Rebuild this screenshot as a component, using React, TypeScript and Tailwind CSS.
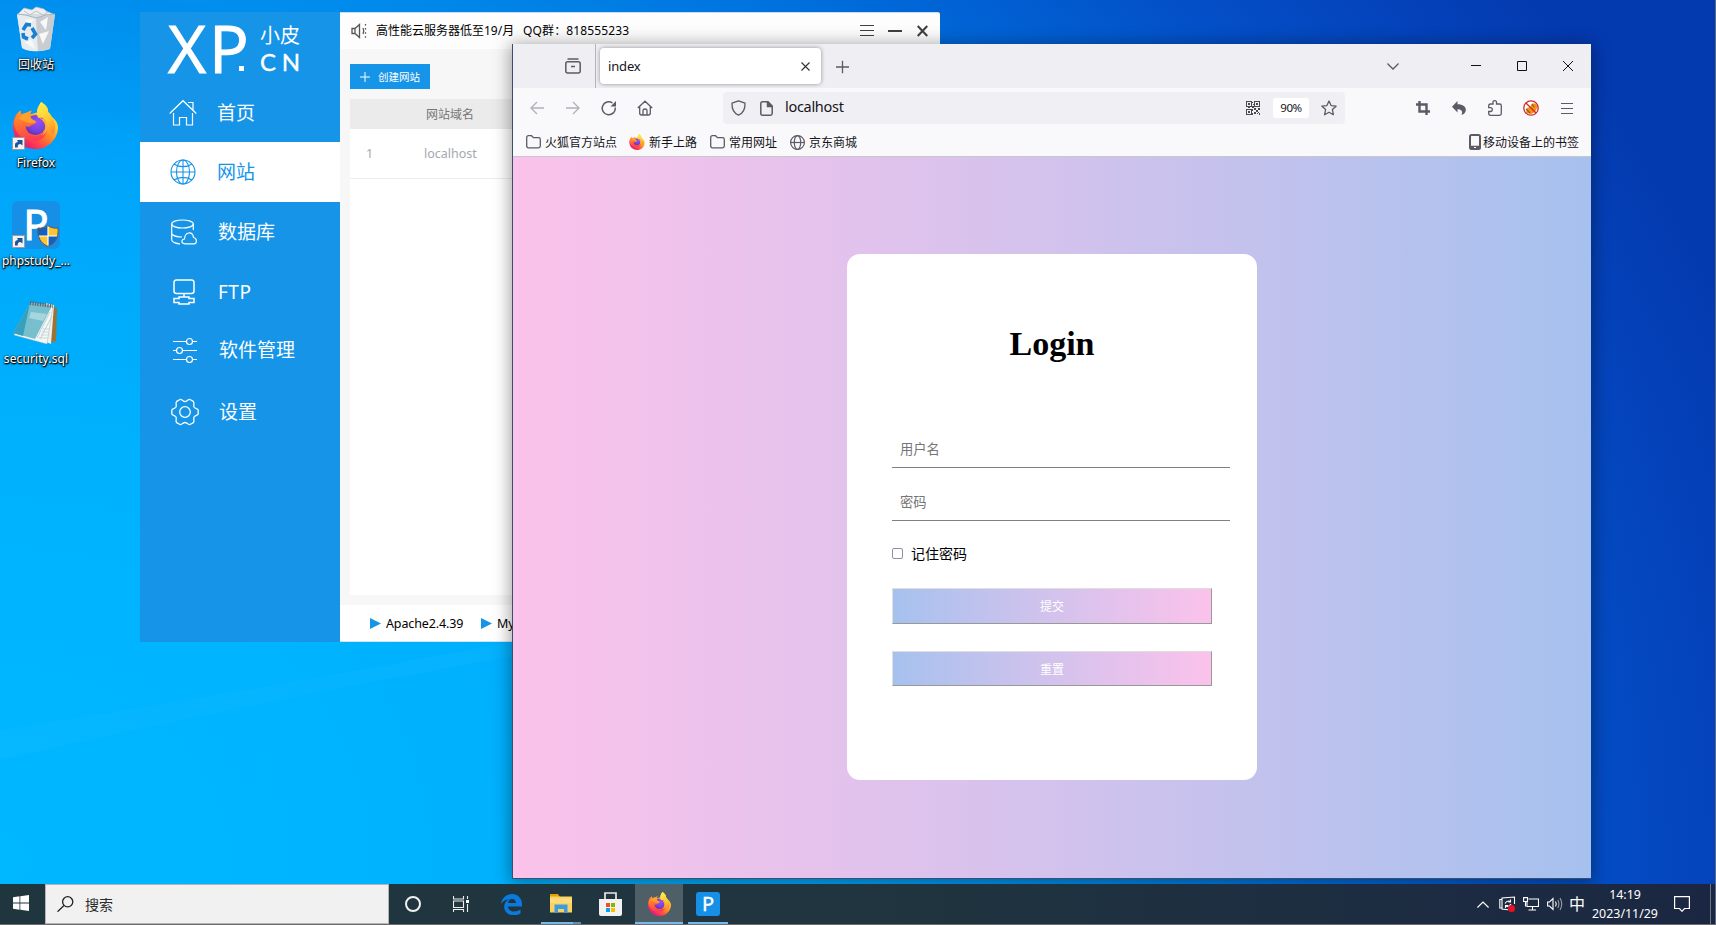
import type { ReactNode } from 'react';

function FirefoxLogo({ className, id }: { className: string; id: string }) {
  return (
    <svg className={className} viewBox="0 0 48 50">
      <defs>
        <linearGradient id={id + 'a'} x1="0.85" y1="0.1" x2="0.2" y2="0.95">
          <stop offset="0" stopColor="#fff04a" />
          <stop offset="0.3" stopColor="#ffc02c" />
          <stop offset="0.55" stopColor="#ff7d2b" />
          <stop offset="0.78" stopColor="#ff3c50" />
          <stop offset="1" stopColor="#e0127e" />
        </linearGradient>
        <radialGradient id={id + 'b'} cx="0.6" cy="0.35" r="0.7">
          <stop offset="0" stopColor="#9a4cf5" />
          <stop offset="0.6" stopColor="#7544e0" />
          <stop offset="1" stopColor="#6b2bb0" />
        </radialGradient>
        <linearGradient id={id + 'c'} x1="0.3" y1="0" x2="0.5" y2="1">
          <stop offset="0" stopColor="#ff9a2a" />
          <stop offset="0.5" stopColor="#ff6a35" />
          <stop offset="1" stopColor="#ff3a55" />
        </linearGradient>
        <linearGradient id={id + 'd'} x1="0.3" y1="0" x2="0.6" y2="1">
          <stop offset="0" stopColor="#fff04a" />
          <stop offset="0.6" stopColor="#ffc630" />
          <stop offset="1" stopColor="#ff8a30" />
        </linearGradient>
      </defs>
      <path
        d="M30 0C37 4 37.500 8 37.500 11C39.500 12 40 14 41 16C43.500 17 47.500 21 48 27C47.500 40 37 50 24 50C10 50 0 39 0 26C0 19 3 12 8 9C8 11 8.500 12 9 13C12 11.500 16 12 19 13L26 11C24.500 8 28 3 30 0Z"
        fill={`url(#${id}a)`}
      />
      <circle cx="24" cy="24.500" r="10.800" fill={`url(#${id}b)`} />
      <path
        d="M1 23C2 16 5 12 8 9C8 11 8.500 12.500 9.500 13.500C13 12 17 10 20 9C18 12 18 14 19 17C20 19 23 19 25 21C24 24 20 24 18 26C15 27 14 26 13 25C13 33 18 37 26 36C31 35 34 32 36 29C36 37 29 43 20 41C9 40 2 32 1 23Z"
        fill={`url(#${id}c)`}
      />
      <path d="M9.500 13.500C13 12 17 10 20 9C18 12 18 14 19 17C20 19 23 19 25 21C23 23 17 23 13 21C9 19 7 18 6 18Z" fill="#ff9f2c" />
      <path d="M30 0C37 5 37.500 8 37.500 11C43 16 48 25 43 35C39 34 38 21 34 18C31 16 29 17 27 17C24 12 27 5 30 0Z" fill={`url(#${id}d)`} />
      <path d="M28 17C35 17 38 23 36 30C35 33 33 35 31 36C37 29 35 21 28 17Z" fill="#ffad2e" />
    </svg>
  );
}

function ShortcutBadge() {
  return (
    <svg className="absolute bottom-0 left-0 size-[13px]" viewBox="0 0 13 13">
      <path d="M.5 .5h12v12H.5z" fill="#f3f3f3" stroke="#9c9c9c" />
      <path d="M3 10.500V8C3 5.800 4.500 5 6 5L5 3H10.500V8.500L8.500 7C6.500 7 5.500 8 5.800 10.500Z" fill="#1f5498" />
    </svg>
  );
}

function DesktopIcon({ label, children, width }: { label: string; children: ReactNode; width: string }) {
  return (
    <div className="flex h-[98px] w-[72px] flex-col items-center">
      <div className="relative size-12">{children}</div>
      <div className={'mt-[3px] flex h-5 items-center justify-center whitespace-nowrap text-[12px] leading-5 text-white [text-shadow:0_1px_2px_#000,1px_1px_1px_#000,0_0_2px_#000] ' + width}>
        {label}
      </div>
    </div>
  );
}

function RecycleBin() {
  return (
    <svg className="size-12" viewBox="0 0 48 48">
      <path d="M6 8L12 2L20 4L24 1L32 3L34 5L41 8L37 14H9Z" fill="#edf0f2" stroke="#b5bdc4" strokeWidth="0.700" />
      <path d="M5 8H43L38 43Q24 48 10 42Z" fill="#d9dde0" />
      <path d="M5 8L24 12L26 45Q17 46 10 42Z" fill="#e8ebee" />
      <path d="M24 12L43 8L38 43L26 45Z" fill="#c9cdd1" />
      <path d="M13 14L22 13L17 20ZM28 16L36 11L34 24ZM27 28L37 25L31 38ZM12 36L20 34L23 43Z" fill="#f7f8f8" />
      <path d="M5 8L14 9L24 12L34 9L43 8" fill="none" stroke="#a3b6c4" />
      <path d="M12 5L18 9L24 5L31 9L36 6" fill="none" stroke="#bcc1c6" />
      <g fill="none" stroke="#1580d4" strokeWidth="3.600">
        <path d="M11 24L14.500 18.500L19 19" />
        <path d="M20 22L23.500 28L20 32" />
        <path d="M16 33L11.500 31L11 27" />
      </g>
    </svg>
  );
}

function Notepad() {
  return (
    <svg className="size-12" viewBox="0 0 48 48">
      <path d="M38 8L45 10L44 43L38 45Z" fill="#9b7434" />
      <path d="M34 5L42 7L39 46L34 44Z" fill="#eef1f0" />
      <path d="M19 5L41 8L35 46L2 37Z" fill="#f4f7f7" stroke="#a8b7b9" strokeWidth="0.500" />
      <path d="M18 5L40 8L23 41L1 35Z" fill="#78bfce" />
      <path d="M18 5L11 38L1 35Z" fill="#35a1bf" />
      <path d="M19 14L35 16L31 23L17 20Z" fill="#b9dfe4" opacity=".7" />
      <path d="M25 40L38 14M28 41L40 18" stroke="#c5d0d2" />
      <path d="M18 5L41 8" stroke="#60676b" strokeWidth="4" strokeDasharray="1.300 1.200" />
      <path d="M31 31H38M30 34H37M29 37H37M27 40H36" stroke="#bdcaca" strokeWidth="0.700" />
    </svg>
  );
}

function PhpStudy() {
  return (
    <>
      <div className="flex size-12 translate-y-px items-center justify-center rounded-[6px] bg-[#1590e6] font-['Noto_Sans'] text-[42px] leading-none text-white">
        <span className="-translate-y-px [-webkit-text-stroke:0.8px_#fff]">P</span>
      </div>
      <svg className="absolute bottom-[1px] right-[1px] h-[22px] w-[22px]" viewBox="0 0 22 22">
        <path d="M11 .5C14 3 18 3.500 21 3C22 12 18 19 11 21.500C4 19 0 12 1 3C4 3.500 8 3 11 .5Z" fill="#fcc630" />
        <path d="M11 1V11H1C.5 8 .7 5 1 3C4 3.500 8 3 11 1ZM11 11H21C19.500 16 16 20 11 21Z" fill="#1560bd" />
        <path d="M11 1V21M1 11H21" stroke="#fff" strokeWidth="1.200" />
        <path d="M11 .7C14 3 18 3.500 21 3C22 12 18 19 11 21.300C4 19 0 12 1 3C4 3.500 8 3 11 .7Z" fill="none" stroke="#5b5b5b" strokeWidth="1" />
      </svg>
    </>
  );
}

function HouseIcon() {
  return (
    <svg className="h-[28px] w-[28px]" viewBox="0 0 28 28" fill="none" stroke="currentColor" strokeWidth="1.200">
      <path d="M.7 14.500L14 1.700L27.300 14.500M19 3.500H24V11M4.500 14V26H10.500V18.500H17.500V26H23.500V14" />
    </svg>
  );
}
function GridGlobe({ className, sw }: { className: string; sw: string }) {
  return (
    <svg className={className} viewBox="0 0 26 26" fill="none" stroke="currentColor" strokeWidth={sw}>
      <circle cx="13" cy="13" r="12" />
      <ellipse cx="13" cy="13" rx="6.500" ry="12" />
      <path d="M13 1V25M1 13H25M4 5C9 8.500 17 8.500 22 5M4 21C9 17.500 17 17.500 22 21" />
    </svg>
  );
}
function DatabaseIcon() {
  return (
    <svg className="h-[26px] w-[26px]" viewBox="0 0 26 26" fill="none" stroke="currentColor" strokeWidth="1.200">
      <ellipse cx="11.500" cy="5" rx="10.800" ry="4" />
      <path d="M.7 5V21C1 23 5 24.800 9 24.800M22.300 5V11M.7 15C3 17.300 7 18 11 18M14 24.800C10 24.500 10 20.500 13.500 20C14 12.500 21.500 12 22.500 18.500C26 19 26.500 24.500 23 24.800Z" />
    </svg>
  );
}
function FtpIcon() {
  return (
    <svg className="h-[26px] w-[22px]" viewBox="0 0 22 26" fill="none" stroke="currentColor" strokeWidth="1.500">
      <rect x="1" y="1" width="20" height="13.500" rx="2.500" />
      <path d="M11 14.500V18M6 18H16V19.500H21V23.500H16V25H6V23.500H1V19.500H6Z" />
    </svg>
  );
}
function SlidersIcon() {
  return (
    <svg className="h-[26px] w-[24px]" viewBox="0 0 24 26" fill="none" stroke="currentColor" strokeWidth="1.200">
      <path d="M0 4.500H13.500M19.500 4.500H24M0 13.500H3.500M9.500 13.500H24M0 22.500H13.500M19.500 22.500H24" />
      <circle cx="16.500" cy="4.500" r="3" />
      <circle cx="6.500" cy="13.500" r="3" />
      <circle cx="16.500" cy="22.500" r="3" />
    </svg>
  );
}
function GearIcon() {
  return (
    <svg className="h-[28px] w-[28px]" viewBox="0 0 28 28" fill="none" stroke="currentColor" strokeWidth="1.300">
      <circle cx="14" cy="14" r="5.300" />
      <path d="M9 1.500C11 1 12 3.500 14 3.500S17 1 19 1.500L22.300 3.400C24 5 22 7.200 23 9S26.500 10.500 27.200 12V16C26.500 17.500 24 17.200 23 19S24 23 22.300 24.600L19 26.500C17 27 16 24.500 14 24.500S11 27 9 26.500L5.700 24.600C4 23 6 20.800 5 19S1.500 17.500 .8 16V12C1.500 10.500 4 10.800 5 9S4 5 5.700 3.400Z" />
    </svg>
  );
}

function MenuItem({ icon, text, active, nudge = 'pl-[29px]' }: { icon: ReactNode; text: string; active?: boolean; nudge?: string }) {
  return (
    <div className={'flex h-[60px] items-center ' + (active ? 'bg-white text-[#1694e8]' : 'text-white')}>
      <div className={'flex w-full items-center ' + nudge}>
        <div className="flex w-7 justify-center">{icon}</div>
        <div className="ml-5 text-[19px] leading-7">{text}</div>
      </div>
    </div>
  );
}

function PanelWindow() {
  return (
    <div className="absolute left-[140px] top-[12px] flex h-[630px] w-[800px] rounded-tr-[3px] bg-[#f7f7f7]">
      <aside className="w-[200px] shrink-0 bg-[#1694e8]">
        <div className="relative flex h-[70px] text-white">
          <div className="ml-[28px] flex font-['Open_Sans'] text-[66px] font-medium leading-[70px] [-webkit-text-stroke:1px_#fff]">
            <span className="w-[41px]">X</span>
            <span className="w-[42px]">P</span>
          </div>
          <span className="absolute left-[99px] top-[54px] size-[5px] bg-white" />
          <div className="ml-[9px] flex flex-col pt-[12px]">
            <span className="text-[20px] leading-6">小皮</span>
            <span className="mt-[1px] flex justify-between font-['Lato'] text-[24px] leading-[26px] [-webkit-text-stroke:0.4px_#fff]">
              <span>C</span>
              <span>N</span>
            </span>
          </div>
        </div>
        <MenuItem icon={<HouseIcon />} text="首页" nudge="pl-[29px] translate-y-px" />
        <MenuItem icon={<GridGlobe className="size-[26px]" sw="1.1" />} text="网站" active />
        <MenuItem icon={<DatabaseIcon />} text="数据库" nudge="pl-[30px]" />
        <MenuItem icon={<FtpIcon />} text="FTP" nudge="pl-[30px] tracking-[0.5px]" />
        <MenuItem icon={<SlidersIcon />} text="软件管理" nudge="pl-[31px] -translate-y-[2px]" />
        <MenuItem icon={<GearIcon />} text="设置" nudge="pl-[31px]" />
      </aside>
      <div className="flex flex-1 flex-col">
        <header className="flex h-[37px] items-center rounded-tr-[3px] border-t border-[#c9dcec] bg-[#fdfdfd] pl-[11px] pr-[12px] text-[12px] text-black">
          <svg className="h-4 w-4" viewBox="0 0 16 16" fill="none" stroke="#555" strokeWidth="1.300">
            <path d="M1 5.500V10.500H4L8.500 14.500V1.500L4 5.500ZM4 5.500V10.500M12 5Q13.500 8 12 11" />
            <path d="M14.500 1V15" strokeDasharray="1.500 2.600" />
          </svg>
          <span className="ml-[9px] w-[147px] whitespace-nowrap">高性能云服务器低至19/月</span>
          <span className="whitespace-nowrap tracking-[0.13px]">QQ群：818555233</span>
          <div className="ml-auto flex items-center gap-[14px] text-[#404040]">
            <svg className="h-3 w-[14px]" viewBox="0 0 14 12" stroke="currentColor">
              <path d="M0 .5H14M0 5.500H14M0 10.500H14" />
            </svg>
            <svg className="h-3 w-[14px]" viewBox="0 0 14 12" stroke="currentColor" strokeWidth="2">
              <path d="M0 6H14" />
            </svg>
            <svg className="ml-[1px] h-3 w-[11px]" viewBox="0 0 11 12" stroke="currentColor" strokeWidth="2.200">
              <path d="M.7 1L10.300 11M10.300 1L.7 11" />
            </svg>
          </div>
        </header>
        <main className="flex flex-1 flex-col pl-[10px] pt-[15px]">
          <button className="flex h-[25px] w-[80px] items-center bg-[#1694e8] pl-[10px] text-white">
            <svg className="size-[10px]" viewBox="0 0 10 10" stroke="currentColor">
              <path d="M0 5H10M5 0V10" />
            </svg>
            <span className="ml-2 pt-px text-[10.500px] leading-4">创建网站</span>
          </button>
          <div className="mt-[10px] flex h-[30px] items-center bg-[#ebebeb] pt-[2px] text-[12px] text-[#777]">
            <span className="ml-[76px]">网站域名</span>
          </div>
          <div className="flex h-[50px] items-center border-b border-[#ededed] bg-white pt-[2px] text-[12.500px] text-[#a3a8b0]">
            <span className="ml-[16px] w-[58px]">1</span>
            <span>localhost</span>
          </div>
          <div className="h-[416px] bg-white" />
        </main>
        <footer className="flex h-[37px] items-center border-b border-[#d8e4ec] bg-white pl-[30px] text-[12px] text-black">
          <PlayMark />
          <span className="ml-[5px] w-[95px] pt-[2px] text-[12.500px] tracking-[-0.12px]">Apache2.4.39</span>
          <PlayMark />
          <span className="ml-[5px] pt-[2px] text-[12.500px] tracking-[-0.12px]">MySQL5.7.26</span>
        </footer>
      </div>
    </div>
  );
}

function PlayMark() {
  return (
    <svg className="h-[11px] w-[11px]" viewBox="0 0 11 11">
      <path d="M0 0L11 5.500L0 11Z" fill="#1694e8" />
    </svg>
  );
}

const line = { fill: 'none', stroke: '#5b5b66', strokeWidth: 1.3 } as const;

function Folder() {
  return (
    <svg className="h-[14px] w-[15px] -translate-y-px" viewBox="0 0 15 14" {...line} strokeWidth="1.300">
      <path d="M.7 2.500Q.7 .7 2.500 .7H5.500L7.500 2.700H12.500Q14.300 2.700 14.300 4.500V11Q14.300 12.800 12.500 12.800H2.500Q.7 12.800 .7 11Z" />
    </svg>
  );
}

function QrIcon() {
  return (
    <svg className="size-[14px]" viewBox="0 0 14 14" fill="#4a4a52" shapeRendering="crispEdges">
      <path fillRule="evenodd" d="M0 0H6V6H0ZM1 1V5H5V1ZM8 0H14V6H8ZM9 1V5H13V1ZM0 8H6V14H0ZM1 9V13H5V9Z" />
      <path d="M2 2h2v2H2zM10 2h2v2h-2zM2 10h2v2H2zM6 1h1v1H6zM7 3h1v1H7zM6 5h2v2H6zM2 6h2v1H2zM8 7h2v2H8zM12 7h2v2h-2zM6 8h1v2H6zM10 9h2v2h-2zM8 11h2v2H8zM12 11h1v1h-1zM11 12h1v1h-1zM13 12h1v2h-1zM6 12h1v2H6z" />
    </svg>
  );
}

function BrowserWindow() {
  return (
    <div className="absolute left-[512px] top-[44px] flex h-[835px] w-[1079px] flex-col border-b border-l border-[#38506b] bg-[#f9f9fb] shadow-[0_2px_16px_2px_rgba(0,0,0,0.36)]">
      <div className="flex h-[44px] shrink-0 items-center bg-[#efeef3]">
        <div className="flex h-full w-[83px] items-center border-r border-[#b4b4bb] pl-[52px]">
          <svg className="h-4 w-4" viewBox="0 0 16 16" {...line} strokeWidth="1.500">
            <path d="M2.500 1H13.500" />
            <rect x=".8" y="3.800" width="14.400" height="11.200" rx="2" />
            <path d="M6 8.500H10" />
          </svg>
        </div>
        <div className="ml-[4px] flex h-[36px] w-[221px] items-center rounded-[4px] bg-white pl-[8px] pr-[11px] text-[13px] text-[#15141a] shadow-[0_0_4px_rgba(0,0,0,0.4)]">
          <span className="pt-[2px] tracking-[-0.15px]">index</span>
          <svg className="ml-auto h-[9px] w-[9px]" viewBox="0 0 9 9" stroke="#333" strokeWidth="1.100">
            <path d="M.5 .5L8.500 8.500M8.500 .5L.5 8.500" />
          </svg>
        </div>
        <svg className="ml-[15px] h-[13px] w-[13px] translate-y-[0.5px]" viewBox="0 0 13 13" {...line}>
          <path d="M0 6.500H13M6.500 0V13" />
        </svg>
        <div className="ml-auto flex items-center pr-[18px]">
          <svg className="mr-[72px] h-[7px] w-3" viewBox="0 0 12 7" {...line}>
            <path d="M.4 .5L6 6L11.600 .5" />
          </svg>
          <svg className="mr-[36px] h-[10px] w-[10px]" viewBox="0 0 10 10" stroke="#111">
            <path d="M0 4.500H10" />
          </svg>
          <svg className="mr-[36px] h-[10px] w-[10px]" viewBox="0 0 10 10" fill="none" stroke="#111">
            <path d="M.5 .5H9.500V9.500H.5Z" />
          </svg>
          <svg className="h-[10px] w-[10px]" viewBox="0 0 10 10" stroke="#111">
            <path d="M0 0L10 10M10 0L0 10" />
          </svg>
        </div>
      </div>
      <div className="flex h-[40px] shrink-0 items-center">
        <svg className="ml-[17px] h-[14px] w-[14px] opacity-45" viewBox="0 0 14 14" {...line}>
          <path d="M14 7H1M7 1L1 7L7 13" />
        </svg>
        <svg className="ml-[22px] h-[14px] w-[14px] opacity-45" viewBox="0 0 14 14" {...line}>
          <path d="M0 7H13M7 1L13 7L7 13" />
        </svg>
        <svg className="ml-[21px] h-[16px] w-[16px]" viewBox="0 0 16 16" {...line} strokeWidth="1.500">
          <path d="M14.200 7.500A6.500 6.500 0 1 1 11.500 3" />
          <path d="M15 1V6.500H9.500Z" fill="#5b5b66" stroke="none" />
        </svg>
        <svg className="ml-[20px] h-[16px] w-[16px]" viewBox="0 0 16 16" {...line}>
          <path d="M.8 8L8 1.200L15.200 8M2.700 6.500V13Q2.700 15 4.700 15H11.300Q13.300 15 13.300 13V6.500M6 15V10.500Q6 9 8 9T10 10.500V15" />
        </svg>
        <div className="ml-[70px] flex h-[32px] w-[622px] items-center rounded-[4px] bg-[#f0f0f4] pl-[8px]">
          <svg className="h-4 w-[15px]" viewBox="0 0 15 16" {...line}>
            <path d="M7.500 .8L14 3.200C14.200 9 12.500 13 7.500 15.200C2.500 13 .8 9 1 3.200Z" strokeLinejoin="round" />
          </svg>
          <svg className="ml-[14px] h-[15px] w-[13px]" viewBox="0 0 13 15" {...line} strokeWidth="1.500">
            <path d="M2.500 .8H8L12.200 5V12.500Q12.200 14.200 10.500 14.200H2.500Q.8 14.200 .8 12.500V2.500Q.8 .8 2.500 .8Z" />
            <path d="M7.500 1V5.500H12Z" fill="#5b5b66" />
          </svg>
          <span className="ml-[12px] pb-[2px] text-[14.500px] tracking-[-0.3px] text-[#15141a]">localhost</span>
          <div className="ml-auto flex items-center pr-[8px]">
            <QrIcon />
            <span className="ml-[13px] flex h-5 w-[36px] items-center justify-center rounded-[3px] bg-white text-[11.500px] tracking-[-0.4px] text-[#15141a]">90%</span>
            <svg className="ml-[12px] h-4 w-4" viewBox="0 0 16 16" {...line}>
              <path d="M8 1L10.100 5.600L15.100 6.200L11.400 9.600L12.400 14.700L8 12.200L3.600 14.700L4.600 9.600L.9 6.200L5.900 5.600Z" strokeLinejoin="round" />
            </svg>
          </div>
        </div>
        <div className="ml-auto flex items-center pr-[18px]">
          <svg className="h-[14px] w-[14px]" viewBox="0 0 14 14" fill="none" stroke="#5b5b66" strokeWidth="2.400">
            <path d="M0 3.500H10.500V14M3.500 0V10.500H14" />
          </svg>
          <svg className="ml-[22px] h-[14px] w-[14px]" viewBox="0 0 14 14">
            <path d="M5.500 0V3.300C11 3.300 14 6 13.800 9C13.700 11.500 12 13.500 9.500 14C11 11 10 8.300 5.500 8.300V11.500L0 5.700Z" fill="#5b5b66" />
          </svg>
          <svg className="ml-[22px] h-4 w-[14px]" viewBox="0 0 14 16" {...line}>
            <path d="M5 4V2.300Q5 .7 6.800 .7T8.500 2.300V4H11.500Q13.300 4 13.300 5.800V13.500Q13.300 15.300 11.500 15.300H2.500Q.7 15.300 .7 13.500V11.500H2.500Q4.300 11.500 4.300 9.600T2.500 7.700H.7V6Q.7 4 2.500 4Z" />
          </svg>
          <svg className="ml-[21px] h-4 w-4" viewBox="0 0 16 16">
            <circle cx="8" cy="8" r="7.500" fill="#fff" />
            <path d="M3 13L4 8L7 7L9 3.500L13 3.500L14.500 7L12 12L8 14Z" fill="#ee940f" />
            <path d="M3 9L7 13M9 4L11 7" stroke="#8a5a25" strokeWidth="1.200" />
            <circle cx="8" cy="8" r="7.200" fill="none" stroke="#d3262c" strokeWidth="1.300" />
            <path d="M3 3L13 13" stroke="#d3262c" strokeWidth="1.300" />
          </svg>
          <svg className="ml-[22px] h-[11px] w-3" viewBox="0 0 12 11" {...line} strokeWidth="1">
            <path d="M0 .5H12M0 5.500H12M0 10.500H12" />
          </svg>
        </div>
      </div>
      <div className="flex h-[29px] shrink-0 items-center border-b border-[#c8c8cc] pl-[13px] pr-[12px] pt-px text-[12px] text-[#15141a]">
        <Folder />
        <span className="ml-1 w-[84px]">火狐官方站点</span>
        <FirefoxLogo className="size-4 -translate-y-px" id="bm" />
        <span className="ml-[4px] w-[61px]">新手上路</span>
        <Folder />
        <span className="ml-1 w-[61px]">常用网址</span>
        <svg className="size-[15px]" viewBox="0 0 15 15" {...line} strokeWidth="1.200">
          <circle cx="7.500" cy="7.500" r="6.900" />
          <ellipse cx="7.500" cy="7.500" rx="3.200" ry="6.900" />
          <path d="M.6 7.500H14.400" />
        </svg>
        <span className="ml-1">京东商城</span>
        <svg className="ml-auto h-4 w-3 -translate-y-px" viewBox="0 0 12 16">
          <rect x="1" y="1" width="10" height="14" rx="1.500" fill="none" stroke="#5b5b66" strokeWidth="2" />
          <path d="M1 13H11" stroke="#5b5b66" strokeWidth="2.500" />
          <path d="M5 13.500H7" stroke="#fff" />
        </svg>
        <span className="ml-[2px]">移动设备上的书签</span>
      </div>
      <div className="flex flex-1 items-start justify-center bg-linear-to-r from-[#fbc2eb] to-[#a6c1ee] pt-[97px]">
        <form className="flex h-[526px] w-[410px] flex-col rounded-[13px] bg-white pl-[45px] text-black">
          <h1 className="mr-[45px] mt-[70px] text-center font-['Liberation_Serif'] text-[34px] font-bold leading-10">Login</h1>
          <input
            className="mt-[70px] h-[34px] w-[338px] border-b border-[#808080] pb-[3px] pl-[8px] text-[13.300px] placeholder:text-[#757575]"
            placeholder="用户名"
          />
          <input
            className="mt-[19px] h-[34px] w-[338px] border-b border-[#808080] pb-[3px] pl-[8px] text-[13.300px] placeholder:text-[#757575]"
            placeholder="密码"
          />
          <label className="mt-[22px] flex h-5 items-center text-[14px]">
            <span className="size-[11px] rounded-[2px] border border-[#8f8f9d] bg-white" />
            <span className="ml-[8px]">记住密码</span>
          </label>
          <button
            type="button"
            className="mt-[25px] h-[36px] w-[320px] border border-b-[#999] border-l-[#dfdfdf] border-r-[#999] border-t-[#dfdfdf] bg-linear-to-r from-[#a6c1ee] to-[#fbc2eb] pt-[2px] text-[12px] text-white"
          >
            提交
          </button>
          <button
            type="button"
            className="mt-[27px] h-[35px] w-[320px] border border-b-[#999] border-l-[#dfdfdf] border-r-[#999] border-t-[#dfdfdf] bg-linear-to-r from-[#a6c1ee] to-[#fbc2eb] pt-[2px] text-[12px] text-white"
          >
            重置
          </button>
        </form>
      </div>
    </div>
  );
}

function Cell({ children, className = '' }: { children: ReactNode; className?: string }) {
  return <div className={'relative flex h-10 w-12 items-center justify-center ' + className}>{children}</div>;
}

function Taskbar() {
  return (
    <div className="absolute bottom-0 left-0 flex h-[41px] w-full items-start border-b border-[#6c6c6c] bg-linear-to-r from-[#20363f] via-[#20353f] via-50% to-[#1b2742] text-white">
      <div className="flex h-10 w-[45px] items-center pl-[13px]">
        <svg className="size-4 -translate-y-px" viewBox="0 0 16 16" fill="#fff">
          <path d="M0 2.200L6.500 1.300V7.600H0ZM7.300 1.200L16 0V7.600H7.300ZM0 8.400H6.500V14.700L0 13.800ZM7.300 8.400H16V16L7.300 14.800Z" />
        </svg>
      </div>
      <div className="flex h-10 w-[344px] items-center border border-[#b5b5b5] bg-[#f1f1f1] pl-[11px]">
        <svg className="h-4 w-[17px]" viewBox="0 0 17 16" fill="none" stroke="#222" strokeWidth="1.300">
          <circle cx="10.700" cy="5.800" r="5.100" />
          <path d="M7 9.500L.5 15.700" />
        </svg>
        <span className="ml-[11px] text-[14px] text-[#2b2b2b]">搜索</span>
      </div>
      <Cell>
        <span className="size-4 rounded-full border-2 border-[#f2f2f2]" />
      </Cell>
      <Cell>
        <svg className="h-4 w-4" viewBox="0 0 16 16" fill="none" stroke="#eee" strokeWidth="1.100">
          <path d="M.5 0V3H10.500V0M.5 5H10.500V11.500H.5ZM.5 16V13.500H10.500V16M14.500 0V3M14.500 8V16" />
          <path d="M13 4h3v3h-3z" fill="#fff" stroke="none" />
        </svg>
      </Cell>
      <Cell className="ml-[2px]">
        <svg className="h-[21px] w-[21px]" viewBox="0 0 21 21">
          <path d="M0 10C1 3.500 5.500 0 11 0C17 0 21 4.500 21 10V12.500H7C7.500 18.500 15 18.500 19.500 15.500V19.500C12 23.500 3.500 20.500 3.200 13C3.100 9.500 5 6.800 8 5.500C4.500 5.500 1.500 7.500 0 10ZM7.200 9H15C15 6.800 13.500 5 11 5S7.300 7 7.200 9Z" fill="#0a7bdc" />
        </svg>
      </Cell>
      <Cell className="ml-[2px]">
        <svg className="h-[20px] w-[22px]" viewBox="0 0 22 20">
          <path d="M0 0H8L10 3H0Z" fill="#e3a008" />
          <path d="M0 2.500H22V18.500H0Z" fill="#fbd261" />
          <path d="M0 4.500H22V9H0Z" fill="#fddc7d" />
          <path d="M4.500 19V10.500H17.500V19H14V15H8V19Z" fill="#3f9be0" />
        </svg>
        <span className="absolute bottom-0 left-1 h-[2px] w-8 bg-[#76b9ed]" />
        <span className="absolute bottom-0 left-9 h-[2px] w-2 bg-[#5b8fb5]" />
      </Cell>
      <Cell className="ml-px">
        <svg className="h-[24px] w-[23px]" viewBox="0 0 23 24">
          <path d="M6 8V1H17V8" fill="none" stroke="#e8e8e8" strokeWidth="1.700" />
          <path d="M0 7H23V22Q23 24 21 24H2Q0 24 0 22Z" fill="#f2f2f2" />
          <path d="M7 11h4v4H7z" fill="#f25022" />
          <path d="M12 11h4v4h-4z" fill="#7fba00" />
          <path d="M7 16h4v4H7z" fill="#00a4ef" />
          <path d="M12 16h4v4h-4z" fill="#ffb900" />
        </svg>
      </Cell>
      <Cell className="ml-px bg-[#4f5f67]">
        <FirefoxLogo className="h-[24px] w-[23px]" id="tb" />
        <span className="absolute bottom-0 left-0 h-[2px] w-full bg-[#76b9ed]" />
      </Cell>
      <Cell className="ml-px">
        <span className="flex size-6 items-center justify-center rounded-[3px] bg-[#1590e6] font-['Noto_Sans'] text-[20px] leading-none [-webkit-text-stroke:0.4px_#fff]">P</span>
        <span className="absolute bottom-0 left-1 h-[2px] w-10 bg-[#76b9ed]" />
      </Cell>
      <div className="ml-auto flex h-10 items-center">
        <svg className="h-[7px] w-3" viewBox="0 0 12 7" fill="none" stroke="#fff" strokeWidth="1.200">
          <path d="M.4 6.500L6 1L11.600 6.500" />
        </svg>
        <svg className="ml-[10px] h-4 w-[17px]" viewBox="0 0 17 16" fill="none" stroke="#fff" strokeWidth="1.100">
          <path d="M15.500 8V1L3 2V13L9 13.800M3 3.500H.8V12H3" />
          <path d="M6 7.500Q8 4 11.500 5.500M11.500 3.500V6H9.500M12 8Q10 11.500 7 10M6.500 12V9.500H9" />
          <circle cx="12.500" cy="12.500" r="3.500" fill="#e81123" stroke="none" />
        </svg>
        <svg className="ml-[7px] h-[14px] w-4" viewBox="0 0 16 14" fill="none" stroke="#fff" strokeWidth="1.100">
          <path d="M5.500 2H15.500V9.500H4V5M9.500 9.500V13M5.500 13H13M.6 .6H4.500V4.500H.6ZM2.500 4.500V9.500" />
        </svg>
        <svg className="ml-[8px] h-[14px] w-4" viewBox="0 0 16 14" fill="none" stroke="#fff" strokeWidth="1.100">
          <path d="M.6 5H2.500L6 1.500V12.500L2.500 9H.6ZM8.500 4.500Q10 7 8.500 9.500" />
          <path d="M10.800 3Q13 7 10.800 11M13 1Q16.500 7 13 13" opacity=".55" />
        </svg>
        <span className="ml-[6px] w-4 text-center text-[16px] leading-5">中</span>
        <div className="ml-[5px] flex w-[70px] flex-col items-center whitespace-nowrap text-[12.400px] leading-[19px]">
          <span>14:19</span>
          <span>2023/11/29</span>
        </div>
        <svg className="ml-[14px] h-4 w-4" viewBox="0 0 16 16" fill="none" stroke="#fff" strokeWidth="1.200">
          <path d="M.6 .6H15.400V12.500H10.500L8 15.300L5.500 12.500H.6Z" />
        </svg>
        <span className="ml-5 h-10 w-[6px] border-l border-[#6d7683]" />
      </div>
    </div>
  );
}

export default function App() {
  return (
    <div className="relative h-[925px] w-[1716px] overflow-hidden bg-[#0340b9] bg-[radial-gradient(ellipse_1850px_1550px_at_0px_860px,#00b8ff_0%,#00b2fe_26%,#00a5fa_45%,#0088ea_60%,#0068d8_73%,#0350c8_84%,#0444bc_92%,#043ab0_100%)] font-['Noto_Sans','Noto_Sans_CJK_SC',sans-serif]">
      <svg className="absolute inset-0 h-full w-full" viewBox="0 0 1716 925" preserveAspectRatio="none">
        <path d="M0 730Q260 690 520 640L520 655Q260 700 0 760Z" fill="#5fd2ff" opacity=".05" />
        <path d="M0 0H160Q300 20 620 -10V120H0Z" fill="#0080e0" opacity=".07" />
      </svg>
      <div className="absolute left-0 top-[4px] flex flex-col">
        <DesktopIcon label="回收站" width="w-[72px]">
          <div className="translate-y-[2px]">
            <RecycleBin />
          </div>
        </DesktopIcon>
        <DesktopIcon label="Firefox" width="w-[72px] tracking-[0px]">
          <FirefoxLogo className="size-[47px]" id="dt" />
          <ShortcutBadge />
        </DesktopIcon>
        <DesktopIcon label="phpstudy_..." width="w-[72px] tracking-[0px]">
          <PhpStudy />
          <ShortcutBadge />
        </DesktopIcon>
        <DesktopIcon label="security.sql" width="w-[72px] tracking-[0.1px]">
          <Notepad />
        </DesktopIcon>
      </div>
      <PanelWindow />
      <BrowserWindow />
      <Taskbar />
      <div className="absolute right-0 top-0 h-full w-px bg-[#5f6b80]" />
    </div>
  );
}
